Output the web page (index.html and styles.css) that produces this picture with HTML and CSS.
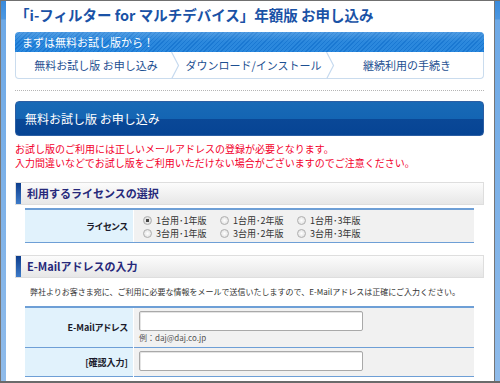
FILE: index.html
```html
<!DOCTYPE html>
<html lang="ja">
<head>
    <meta charset="UTF-8">
    <meta name="viewport" content="width=device-width, initial-scale=1.0">
    <title>i-フィルター for マルチデバイス 年額版 お申し込み</title>
    <link rel="stylesheet" href="styles.css">
</head>
<body>
    <div class="window">
        <div class="edge"></div>
        <div class="page">
            <h1 class="title">「i-フィルター for マルチデバイス」年額版 お申し込み</h1>

            <div class="steps">
                <div class="steps-head">まずは無料お試し版から！</div>
                <ol class="steps-list">
                    <li>無料お試し版 お申し込み
                        <svg class="chev" width="9" height="27" viewBox="0 0 9 27"><polyline points="0.5,0 7.5,13.5 0.5,27" fill="#fff" stroke="#c6daef" stroke-width="1.2"/></svg>
                    </li>
                    <li>ダウンロード/インストール
                        <svg class="chev" width="9" height="27" viewBox="0 0 9 27"><polyline points="0.5,0 7.5,13.5 0.5,27" fill="#fff" stroke="#c6daef" stroke-width="1.2"/></svg>
                    </li>
                    <li>継続利用の手続き</li>
                </ol>
            </div>

            <hr class="dots">

            <h2 class="panel-title">無料お試し版 お申し込み</h2>
            <p class="notice">お試し版のご利用には正しいメールアドレスの登録が必要となります。<br>入力間違いなどでお試し版をご利用いただけない場合がございますのでご注意ください。</p>

            <h3 class="sec">利用するライセンスの選択</h3>
            <table class="form">
                <tr>
                    <th>ライセンス</th>
                    <td class="licenses">
                        <label><input type="radio" name="license" checked>1台用･1年版</label>
                        <label><input type="radio" name="license">1台用･2年版</label>
                        <label><input type="radio" name="license">1台用･3年版</label>
                        <label><input type="radio" name="license">3台用･1年版</label>
                        <label><input type="radio" name="license">3台用･2年版</label>
                        <label><input type="radio" name="license">3台用･3年版</label>
                    </td>
                </tr>
            </table>

            <h3 class="sec">E-Mailアドレスの入力</h3>
            <p class="lead">弊社よりお客さま宛に、ご利用に必要な情報をメールで送信いたしますので、E-Mailアドレスは正確にご入力ください。</p>
            <table class="form form-mail">
                <tr>
                    <th>E-Mailアドレス</th>
                    <td>
                        <input type="text" class="field">
                        <div class="example">例：daj@daj.co.jp</div>
                    </td>
                </tr>
                <tr>
                    <th>[確認入力]</th>
                    <td><input type="text" class="field"></td>
                </tr>
            </table>
        </div>
        <div class="edge"></div>
    </div>
</body>
</html>
```

FILE: styles.css
```css
html, body {
    margin: 0;
}
body {
    font-family: "Noto Sans CJK JP", "Noto Sans", sans-serif;
    background: #fff;
}
.window {
    display: flex;
    height: 383px;
    box-sizing: border-box;
    border-top: 1px solid #707070;
    border-bottom: 2px solid #6a6a6a;
    overflow: hidden;
}
.edge {
    flex: none;
    width: 5px;
    border-left: 1px solid #767676;
    background: linear-gradient(#3a8bdc, #4b96e0 18px, #6ea9e6 19px, #8fbbea);
}
.page {
    flex: 1;
    min-width: 0;
    padding: 4px 10px 0 9px;
}
.title {
    margin: 0 0 7px;
    font-size: 14.5px;
    line-height: 20px;
    font-weight: bold;
    color: #1a52a6;
}

/* steps */
.steps-head {
    height: 20px;
    line-height: 20px;
    padding-left: 7px;
    font-size: 11px;
    color: #fff;
    border-radius: 4px 4px 0 0;
    background:
        linear-gradient(rgba(255, 255, 255, 0.18), rgba(255, 255, 255, 0) 50%),
        repeating-linear-gradient(135deg, #1a78d2 0 1px, #2b88dd 1px 3px);
}
.steps-list {
    list-style: none;
    margin: 0;
    padding: 0;
    display: grid;
    grid-template-columns: 160px 155px 1fr;
    height: 27px;
    box-sizing: border-box;
    border: 1px solid #cadcee;
    border-top: 0;
    border-radius: 0 0 4px 4px;
    background: #fff;
}
.steps-list li {
    position: relative;
    display: flex;
    align-items: center;
    justify-content: center;
    font-size: 11px;
    color: #1d4f91;
}
.chev {
    position: absolute;
    top: 0;
    right: -4px;
}
.dots {
    height: 0;
    margin: 11px 0 10px;
    border: 0;
    border-top: 1px dotted #b5b5b5;
}

/* panel */
.panel-title {
    margin: 0;
    height: 35px;
    line-height: 33px;
    box-sizing: border-box;
    padding-left: 9px;
    font-size: 12px;
    font-weight: normal;
    color: #fff;
    border: 1px solid #2b5ea3;
    border-radius: 4px;
    background: linear-gradient(#1869b6, #1465b3 50%, #0a4897 50%, #064494);
}
.notice {
    margin: 6px 0 0;
    font-size: 10px;
    line-height: 14px;
    color: #f3002c;
}

/* section headers */
.sec {
    margin: 12px 0 0;
    height: 23px;
    line-height: 21px;
    box-sizing: border-box;
    padding-left: 11px;
    font-size: 11px;
    font-weight: bold;
    color: #26287a;
    border: 1px solid #dedede;
    background:
        linear-gradient(#0d3d8c, #3d7bc9) left / 5px 100% no-repeat,
        linear-gradient(#fcfcfc, #e7e7e7);
}

/* form tables */
.form {
    margin: 3px 10px 0;
    width: 449px;
    border-collapse: collapse;
    border-top: 2px solid #6e9fd6;
    border-bottom: 1px solid #6e9fd6;
}
.form th {
    width: 103px;
    padding: 0 5px 0 0;
    text-align: right;
    font-size: 9px;
    font-weight: bold;
    font-feature-settings: "palt";
    color: #1a1a2a;
    background: #e1f2fc;
}
.form td {
    padding: 3px 0 3px 5px;
    border-left: 1px solid #fff;
    background: #f1f1f1;
}
.form tr + tr th,
.form tr + tr td {
    border-top: 1px solid #6e9fd6;
}
.form .licenses {
    display: grid;
    grid-template-columns: repeat(3, 77px);
    padding: 4px 0 2px 9px;
}
.licenses label {
    display: flex;
    align-items: center;
    gap: 4px;
    height: 13px;
    font-size: 9px;
    color: #333;
}
.licenses input {
    appearance: none;
    margin: 0;
    width: 9px;
    height: 9px;
    border: 1px solid #b0b0b0;
    border-radius: 50%;
    background: radial-gradient(#fff, #dadada);
}
.licenses input:checked {
    background: radial-gradient(#444 0 1.5px, #e8e8e8 2px, #cfcfcf);
}
.lead {
    margin: 7px 0 0 15px;
    font-size: 8px;
    line-height: 14px;
    color: #333;
}
.form-mail {
    margin-top: 7px;
}
.field {
    display: block;
    width: 224px;
    height: 20px;
    box-sizing: border-box;
    margin: 0;
    border: 1px solid #a9a9a9;
    border-radius: 2px;
    box-shadow: inset 1px 1px 0 #e4e4e4;
    background: #fff;
}
.form-mail tr + tr td {
    padding-bottom: 5px;
}
.example {
    margin-top: 1px;
    font-size: 8px;
    line-height: 12px;
    color: #555;
}
```
